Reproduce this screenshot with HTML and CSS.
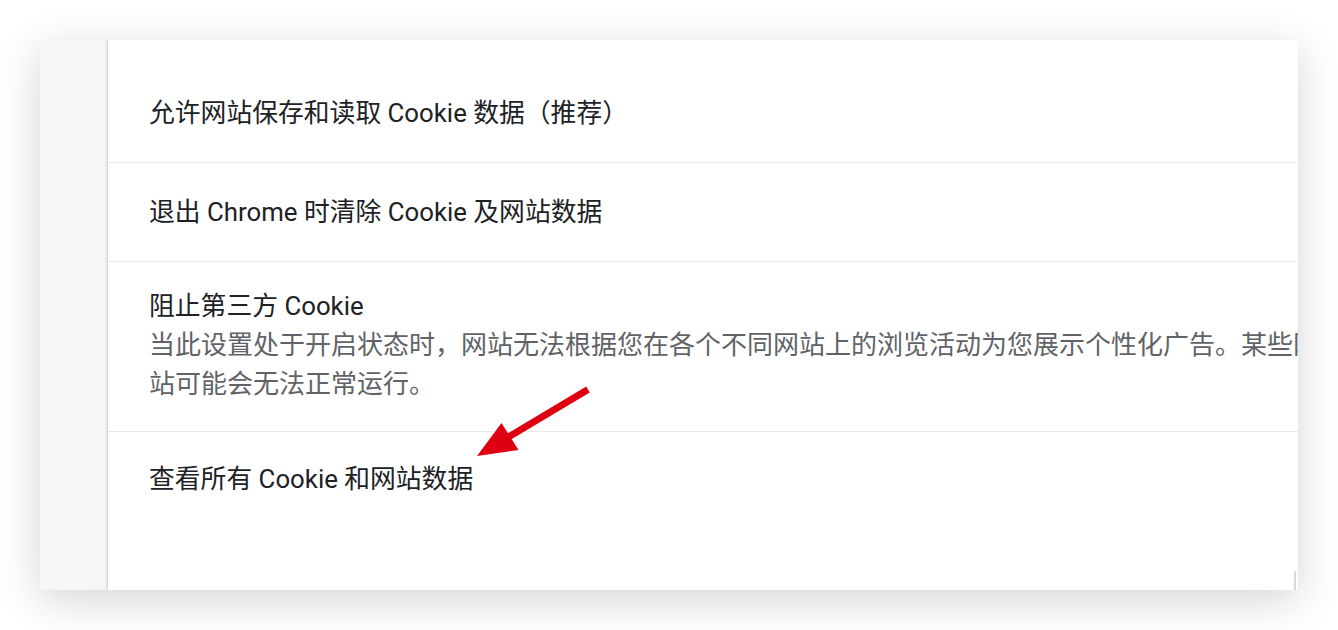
FILE: index.html
```html
<!DOCTYPE html>
<html lang="zh-CN">
<head>
  <meta charset="UTF-8">
  <title>Cookie 设置</title>
  <link rel="stylesheet" href="styles.css">
</head>
<body>
  <div class="card">
    <div class="sidebar"></div>
    <div class="content">
      <div class="row">允许网站保存和读取 Cookie 数据（推荐）</div>
      <div class="row">退出 Chrome 时清除 Cookie 及网站数据</div>
      <div class="row row-tall">
        <div class="label">阻止第三方 Cookie</div>
        <div class="desc">当此设置处于开启状态时，网站无法根据您在各个不同网站上的浏览活动为您展示个性化广告。某些网站可能会无法正常运行。</div>
      </div>
      <div class="row row-last">查看所有 Cookie 和网站数据</div>
    </div>
    <div class="scroll-edge"></div>
    <svg class="arrow" width="1338" height="630" viewBox="0 0 1338 630">
      <line x1="588" y1="389.5" x2="505" y2="439" stroke="#de0011" stroke-width="7" />
      <polygon points="477,456 501.5,423 518.5,450" fill="#de0011" />
    </svg>
  </div>
</body>
</html>
```

FILE: styles.css
```css
body {
  margin: 0;
  background-color: #fff;
  font-family: Roboto, "Noto Sans CJK SC", sans-serif;
}
.card {
  margin: 40px;
  height: 550px;
  display: flex;
  background-color: #fff;
  box-shadow: 0 10px 40px rgba(0, 0, 0, 0.17);
  overflow: hidden;
}
.sidebar {
  width: 67px;
  flex-shrink: 0;
  background-color: #f6f7f9;
  border-right: 1px solid #d6d7da;
  box-shadow: inset -2px 0 2px rgba(0, 0, 0, 0.05);
}
.content {
  flex-grow: 1;
  padding-top: 24px;
  min-width: 0;
}
.row {
  width: 1240px;
  padding: 29px 0 29px 41px;
  font-size: 25.8px;
  line-height: 40px;
  color: #202124;
  border-bottom: 1px solid #e8e9eb;
  white-space: nowrap;
}
.row-tall {
  padding: 24px 0 27px 41px;
  white-space: normal;
}
.row-last {
  padding-top: 27px;
  border-bottom: none;
}
.label {
  line-height: 40px;
}
.desc {
  width: 1176px;
  font-size: 26px;
  line-height: 39px;
  color: #5f6368;
}
.scroll-edge {
  position: absolute;
  left: 1294px;
  top: 570px;
  width: 4px;
  height: 20px;
  border-left: 2px solid #d8d7de;
  border-top-left-radius: 6px;
  box-sizing: border-box;
}
.arrow {
  position: absolute;
  left: 0;
  top: 0;
  pointer-events: none;
}
```
